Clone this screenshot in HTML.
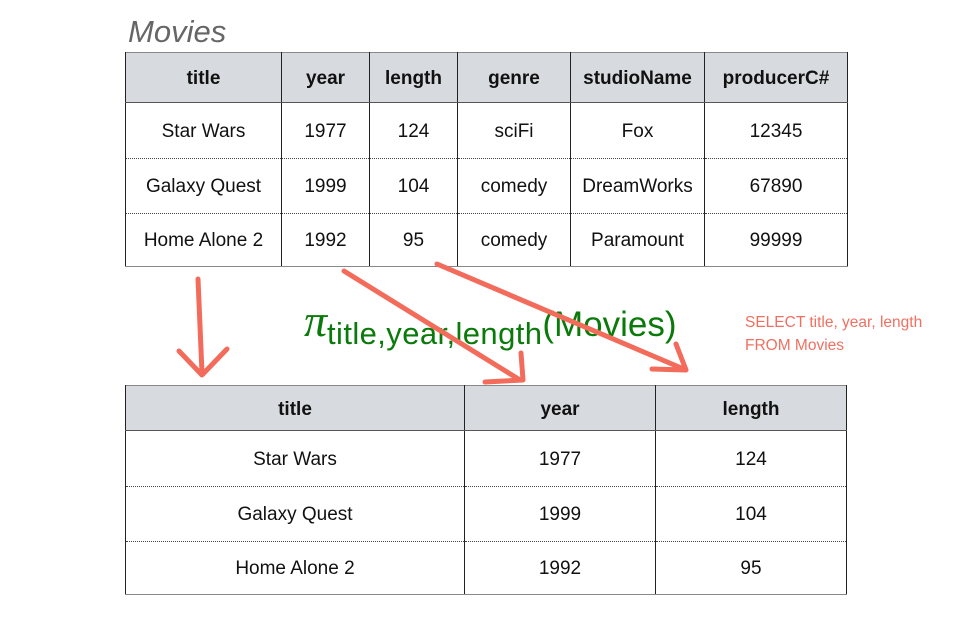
<!DOCTYPE html><html><head><style>
body{margin:0;width:977px;height:623px;background:#fff;position:relative;font-family:"Liberation Sans",sans-serif;overflow:hidden}
.t{position:absolute;border-collapse:collapse;table-layout:fixed}
.t td,.t th{text-align:center;font-size:19px;color:#111;padding:0;border-left:1px solid #222;border-right:1px solid #222}
.t th{background:#d7dbdf;font-weight:bold;border-bottom:1px solid #555;padding-top:3px}
.t td{border-bottom:1px dotted #444;padding-top:2px}
.t tr:last-child td{border-bottom:1px solid #888}
.t{border:1px solid #888}
</style></head><body>
<div style="position:absolute;left:128px;top:14px;font-size:31px;font-style:italic;color:#666">Movies</div>
<table class="t" style="left:125px;top:52px;width:722px">
<colgroup><col style="width:156px"><col style="width:88px"><col style="width:88px"><col style="width:113px"><col style="width:134px"><col style="width:143px"></colgroup>
<tr style="height:50px"><th>title</th><th>year</th><th>length</th><th>genre</th><th>studioName</th><th>producerC#</th></tr>
<tr style="height:56px"><td>Star Wars</td><td>1977</td><td>124</td><td>sciFi</td><td>Fox</td><td>12345</td></tr>
<tr style="height:55px"><td>Galaxy Quest</td><td>1999</td><td>104</td><td>comedy</td><td>DreamWorks</td><td>67890</td></tr>
<tr style="height:53px"><td>Home Alone 2</td><td>1992</td><td>95</td><td>comedy</td><td>Paramount</td><td>99999</td></tr>
</table>
<table class="t" style="left:125px;top:385px;width:722px">
<colgroup><col style="width:339px"><col style="width:191px"><col style="width:191px"></colgroup>
<tr style="height:45px"><th>title</th><th>year</th><th>length</th></tr>
<tr style="height:56px"><td>Star Wars</td><td>1977</td><td>124</td></tr>
<tr style="height:55px"><td>Galaxy Quest</td><td>1999</td><td>104</td></tr>
<tr style="height:53px"><td>Home Alone 2</td><td>1992</td><td>95</td></tr>
</table>
<div style="position:absolute;left:304px;top:294px;color:#0a7a0a;white-space:nowrap">
<span style="font-family:'Liberation Serif',serif;font-style:italic;font-size:46px">π</span><span style="font-size:31px;letter-spacing:0.4px;position:relative;top:8px">title,year,length</span><span style="font-size:35px">(Movies)</span></div>
<div style="position:absolute;left:745px;top:311px;font-size:15.5px;line-height:23px;color:#f07060">SELECT title, year, length<br>FROM Movies</div>
<svg width="977" height="623" style="position:absolute;left:0;top:0" fill="none" stroke="#f26b5b" stroke-width="5" stroke-linecap="round" stroke-linejoin="round">
<path d="M198 279 L202 373 M179 351 L202 375 L227 349"/>
<path d="M344 271 L520 380 M521 353 L523 380 L485 382"/>
<path d="M437 264 L686 370 M676 344 L686 370 L652 369"/>
</svg>
</body></html>
